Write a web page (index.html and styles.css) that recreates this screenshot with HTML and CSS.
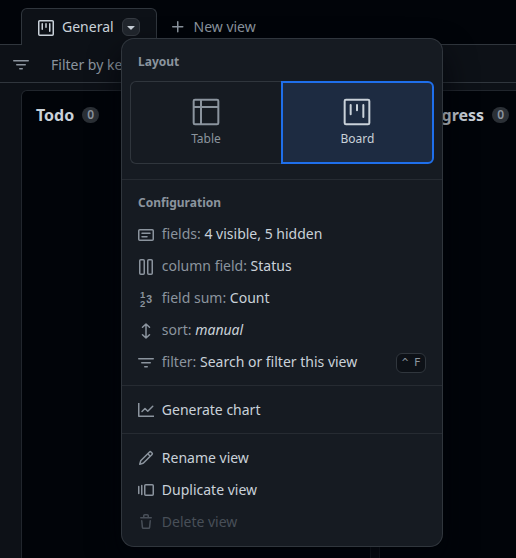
FILE: index.html
```html
<!DOCTYPE html>
<html lang="en">
<head>
<meta charset="utf-8">
<title>General</title>
<link rel="stylesheet" href="styles.css">
</head>
<body>
<svg class="defs" width="0" height="0">
  <symbol id="project" viewBox="0 0 16 16"><path d="M1.75 0h12.5C15.216 0 16 .784 16 1.75v12.5A1.75 1.75 0 0 1 14.25 16H1.75A1.75 1.75 0 0 1 0 14.25V1.75C0 .784.784 0 1.75 0ZM1.5 1.75v12.5c0 .138.112.25.25.25h12.5a.25.25 0 0 0 .25-.25V1.75a.25.25 0 0 0-.25-.25H1.75a.25.25 0 0 0-.25.25ZM11.75 3a.75.75 0 0 1 .75.75v7.5a.75.75 0 0 1-1.5 0v-7.5a.75.75 0 0 1 .75-.75Zm-8.25.75a.75.75 0 0 1 1.5 0v5.5a.75.75 0 0 1-1.5 0ZM8 3a.75.75 0 0 1 .75.75v3.5a.75.75 0 0 1-1.5 0v-3.5A.75.75 0 0 1 8 3Z"/></symbol>
  <symbol id="filter" viewBox="0 0 16 16"><path d="M.75 3h14.5a.75.75 0 0 1 0 1.5H.75a.75.75 0 0 1 0-1.5ZM3 7.75A.75.75 0 0 1 3.75 7h8.5a.75.75 0 0 1 0 1.5h-8.5A.75.75 0 0 1 3 7.75Zm3 4a.75.75 0 0 1 .75-.75h2.5a.75.75 0 0 1 0 1.5h-2.5a.75.75 0 0 1-.75-.75Z"/></symbol>
</svg>
<nav class="tabs">
  <div class="tab">
    <svg class="icon"><use href="#project"/></svg>
    <span class="tab-name">General</span>
    <span class="caret"><svg width="16" height="16" viewBox="0 0 16 16" fill="currentColor"><path d="m4.427 7.427 3.396 3.396a.25.25 0 0 0 .354 0l3.396-3.396A.25.25 0 0 0 11.396 7H4.604a.25.25 0 0 0-.177.427Z"/></svg></span>
  </div>
  <div class="new-view">
    <svg class="icon" viewBox="0 0 16 16"><path d="M7.75 2a.75.75 0 0 1 .75.75V7h4.25a.75.75 0 0 1 0 1.5H8.5v4.25a.75.75 0 0 1-1.5 0V8.5H2.75a.75.75 0 0 1 0-1.5H7V2.75A.75.75 0 0 1 7.75 2Z"/></svg>
    <span>New view</span>
  </div>
</nav>
<div class="filter-bar">
  <svg class="icon"><use href="#filter"/></svg>
  <span>Filter by key</span>
</div>
<main class="board">
  <section class="column"><h2>Todo</h2><span class="count">0</span></section>
  <section class="column"><h2>In Progress</h2><span class="count">0</span></section>
</main>

<div class="menu">
  <h3 class="layout-title">Layout</h3>
  <div class="layouts">
    <div class="layout">
      <svg class="large" viewBox="0 0 24 24"><rect x="2.75" y="2.75" width="18.5" height="18.5" rx="1"/><path d="M2.75 8.25h18.5M8.25 2.75v18.5"/></svg>
      <span>Table</span>
    </div>
    <div class="layout selected">
      <svg class="large" viewBox="0 0 24 24"><rect x="2.75" y="2.75" width="18.5" height="18.5" rx="1"/><path d="M7.25 6.75v7M12 6.75v4M16.75 6.75v9" stroke-linecap="round"/></svg>
      <span>Board</span>
    </div>
  </div>
  <hr>
  <h3 class="config-title">Configuration</h3>
  <div class="config">
    <div class="item"><svg class="icon line" viewBox="0 0 16 16"><rect x=".75" y="2.75" width="14.5" height="10.5" rx="1"/><path d="M4 6.25h8M4 9.75h5" stroke-linecap="round"/></svg><span><i>fields:</i> 4 visible, 5 hidden</span></div>
    <div class="item"><svg class="icon line" viewBox="0 0 16 16"><rect x="1.75" y=".75" width="4.5" height="14.5" rx="1"/><rect x="9.75" y=".75" width="4.5" height="14.5" rx="1"/></svg><span><i>column field:</i> Status</span></div>
    <div class="item"><svg class="icon digits" viewBox="0 0 16 16"><text x="2.1" y="6.8">1</text><text x="2.1" y="15.8">2</text><text x="8.2" y="11.9">3</text></svg><span><i>field sum:</i> Count</span></div>
    <div class="item"><svg class="icon line" viewBox="0 0 16 16"><path d="M8 1v14M4.5 4.25 8 .95l3.5 3.3M4.5 11.75 8 15.05l3.5-3.3" stroke-linecap="round" stroke-linejoin="round"/></svg><span><i>sort:</i> <em>manual</em></span></div>
    <div class="item"><svg class="icon"><use href="#filter"/></svg><span><i>filter:</i> Search or filter this view</span><kbd>^ F</kbd></div>
  </div>
  <hr>
  <div class="item"><svg class="icon line" viewBox="0 0 16 16"><path d="M.75 1v13.25H16" stroke-linejoin="round"/><path d="m4 9.5 3-3 2.75 2.75 5-5" stroke-linecap="round" stroke-linejoin="round"/></svg><span>Generate chart</span></div>
  <hr>
  <div class="item"><svg class="icon" viewBox="0 0 16 16"><path d="M11.013 1.427a1.75 1.75 0 0 1 2.474 0l1.086 1.086a1.75 1.75 0 0 1 0 2.474l-8.61 8.61c-.21.21-.47.364-.756.445l-3.251.93a.75.75 0 0 1-.927-.928l.929-3.25c.081-.286.235-.547.445-.758l8.61-8.61Zm.176 4.823L9.75 4.81l-6.286 6.287a.253.253 0 0 0-.064.108l-.558 1.953 1.953-.558a.253.253 0 0 0 .108-.064Zm1.238-3.763a.25.25 0 0 0-.354 0L10.811 3.75l1.439 1.44 1.263-1.263a.25.25 0 0 0 0-.354Z"/></svg><span>Rename view</span></div>
  <div class="item"><svg class="icon line" viewBox="0 0 16 16"><rect x="6.75" y="2.75" width="8.5" height="10.5" rx="1"/><path d="M3.75 3.5v9M.75 4.5v7" stroke-linecap="round"/></svg><span>Duplicate view</span></div>
  <div class="item disabled"><svg class="icon" viewBox="0 0 16 16"><path d="M11 1.75V3h2.25a.75.75 0 0 1 0 1.5H2.75a.75.75 0 0 1 0-1.5H5V1.75C5 .784 5.784 0 6.75 0h2.5C10.216 0 11 .784 11 1.75ZM4.496 6.675l.66 6.6a.25.25 0 0 0 .249.225h5.19a.25.25 0 0 0 .249-.225l.66-6.6a.75.75 0 0 1 1.492.149l-.66 6.6A1.748 1.748 0 0 1 10.595 15h-5.19a1.75 1.75 0 0 1-1.741-1.575l-.66-6.6a.75.75 0 1 1 1.492-.15ZM6.5 1.75V3h3V1.75a.25.25 0 0 0-.25-.25h-2.5a.25.25 0 0 0-.25.25Z"/></svg><span>Delete view</span></div>
</div>
</body>
</html>
```
FILE: styles.css
```css
* { box-sizing: border-box; }
html, body { height: 100%; }
body {
  margin: 0;
  overflow: hidden;
  display: flex;
  flex-direction: column;
  background: #0d1117;
  color: #c9d1d9;
  font: 14px/20px "Noto Sans", sans-serif;
  white-space: nowrap;
}
.defs { position: absolute; }
.icon { width: 16px; height: 16px; flex: none; fill: currentColor; }
.line { fill: none; stroke: currentColor; stroke-width: 1.5; }

.tabs {
  display: flex;
  height: 45px;
  padding: 8px 0 0 21px;
  background: #010409;
  border-bottom: 1px solid #30363d;
}
.tab {
  display: flex;
  align-items: center;
  width: 136px;
  height: 37px;
  padding: 1px 0 0 16px;
  background: #0d1117;
  border: 1px solid #30363d;
  border-bottom: 0;
  border-radius: 6px 6px 0 0;
}
.tab-name { margin-left: 8px; width: 60px; padding-bottom: 2px; }
.caret {
  display: flex;
  align-items: center;
  justify-content: center;
  width: 18px;
  height: 18px;
  margin-bottom: 2px;
  background: #21262d;
  border: 1px solid #363b42;
  border-radius: 6px;
}
.caret svg { flex: none; }
.new-view {
  display: flex;
  align-items: center;
  gap: 7.5px;
  height: 37px;
  padding: 0 0 0 13px;
  color: #8b949e;
}
.filter-bar {
  display: flex;
  align-items: center;
  gap: 22px;
  height: 38px;
  flex: none;
  padding: 2px 0 0 13px;
  color: #8b949e;
  border-bottom: 1px solid #30363d;
}
.board {
  flex: 1;
  display: flex;
  gap: 8px;
  padding: 7px 0 0 21px;
}
.column {
  display: flex;
  flex: none;
  align-items: flex-start;
  gap: 8px;
  width: 350px;
  padding: 12px 14px 0;
  background: #010409;
  border: 1px solid #21262d;
  border-bottom: 0;
  border-radius: 6px 6px 0 0;
}
.column:last-child {
  flex: 1;
  min-width: 0;
  padding-right: 0;
  border-right: 0;
  border-top-right-radius: 0;
}
.column h2 { margin: 0; font-size: 16px; line-height: 24px; font-weight: 700; }
.count {
  min-width: 17px;
  height: 16px;
  margin-top: 4px;
  background: #2b3036;
  border-radius: 9px;
  color: #8b949e;
  font-size: 12px;
  font-weight: 600;
  line-height: 16px;
  text-align: center;
}

.menu {
  position: absolute;
  left: 122px;
  top: 39px;
  width: 320px;
  height: 507px;
  background: #161b22;
  border-radius: 12px;
  box-shadow: 0 0 0 1px #30363d, 0 16px 32px rgba(1, 4, 9, .85);
}
.menu h3 {
  margin: 0;
  padding-left: 16px;
  color: #8b949e;
  font-size: 12px;
  line-height: 18px;
  font-weight: 700;
}
.menu .layout-title { padding-top: 14px; height: 42px; }
.menu .config-title { padding-top: 7px; height: 31px; }
.layouts { display: flex; margin: 0 8px; height: 83px; }
.layout {
  display: flex;
  flex-direction: column;
  align-items: center;
  width: 151px;
  padding-top: 14px;
  border: 1px solid #30363d;
  border-right: 0;
  border-radius: 6px 0 0 6px;
  color: #8b949e;
  font-size: 12px;
  line-height: 18px;
}
.layout.selected {
  width: 153px;
  padding-top: 13px;
  padding-right: 1px;
  border: 2px solid #1f6feb;
  border-radius: 0 6px 6px 0;
  background: #1d2b41;
  color: #c9d1d9;
}
.layout span { margin-top: 2px; }
.layout.selected span { margin-left: 1px; }
.large { width: 32px; height: 32px; fill: none; stroke: currentColor; stroke-width: 1.5; }
.menu hr { height: 1px; margin: 7px 0 8px; border: 0; background: #262b32; }
.layouts + hr { margin: 15px 0 7px; }
.item {
  display: flex;
  align-items: center;
  gap: 7.8px;
  height: 32px;
  padding: 0 16px;
}
.item .icon { color: #8b949e; }
.item i { font-style: normal; color: #8b949e; }
.config .icon { margin-top: 2px; }
.digits { overflow: visible; }
.digits text { font: bold 9.5px/1 "Liberation Sans", sans-serif; }
.digits text:last-child { font-size: 10.5px; }
.item kbd {
  width: 30px;
  height: 20px;
  margin-left: auto;
  margin-top: 2px;
  background: #0d1117;
  border: 1px solid #30363d;
  border-radius: 6px;
  color: #8b949e;
  font: 11px/18px "DejaVu Sans Mono", monospace;
  letter-spacing: -.5px;
  text-align: center;
}
.item.disabled, .disabled .icon { color: #484f58; }
```
